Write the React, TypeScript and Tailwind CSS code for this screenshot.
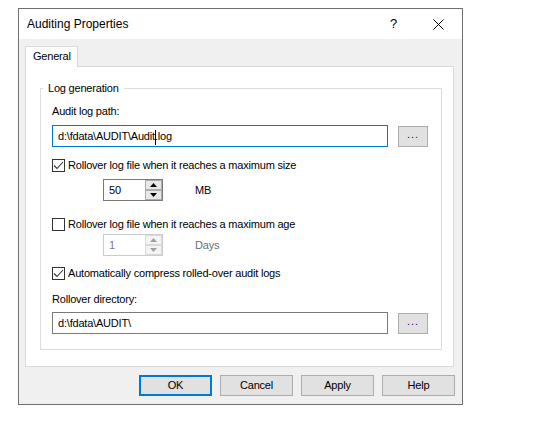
import type { ReactNode } from 'react'

const font = { fontFamily: '"Liberation Sans", Arial, sans-serif' }

function CheckRow({ checked, children }: { checked?: boolean; children: ReactNode }) {
  return (
    <div className="flex items-center h-[16px]">
      <span className="w-[13px] h-[13px] border border-[#333333] bg-white flex items-center justify-center">
        {checked && (
          <svg width="11" height="11" viewBox="0 0 11 11">
            <path d="M1 5.5 L4 8.5 L10 2" fill="none" stroke="#333333" strokeWidth="1.1" />
          </svg>
        )}
      </span>
      <span className="ml-[3px]">{children}</span>
    </div>
  )
}

function Spinner({ value, unit, disabled }: { value: string; unit: string; disabled?: boolean }) {
  const border = disabled ? 'border-[#cccccc]' : 'border-[#7a7a7a]'
  const arrow = disabled ? '#a0a0a0' : '#000000'
  const btn = disabled
    ? 'border-[#d9d9d9] bg-[#f4f4f4]'
    : 'border-[#adadad] bg-[#e8e8e8]'
  return (
    <div className="flex items-center pl-[51px]">
      <div className={`w-[60px] h-[22px] border ${border} bg-white flex`}>
        <span className={`flex-1 pl-[5px] leading-[20px] ${disabled ? 'text-[#7a7a8c]' : 'text-black'}`}>
          {value}
        </span>
        <div className="w-[17px] flex flex-col">
          <span className={`h-[10px] border ${btn} flex items-center justify-center`}>
            <svg width="7" height="4" viewBox="0 0 7 4">
              <path d="M0 4 L3.5 0 L7 4 Z" fill={arrow} />
            </svg>
          </span>
          <span className={`h-[10px] border ${btn} flex items-center justify-center`}>
            <svg width="7" height="4" viewBox="0 0 7 4">
              <path d="M0 0 L3.5 4 L7 0 Z" fill={arrow} />
            </svg>
          </span>
        </div>
      </div>
      <span className={`ml-[32px] ${disabled ? 'text-[#6d6d6d]' : 'text-black'}`}>{unit}</span>
    </div>
  )
}

function BrowseButton() {
  return (
    <button className="w-[30px] h-[21px] border border-[#adadad] bg-[#e1e1e1] flex items-center justify-center text-[#3a0070] leading-none pb-[3px] tracking-[1px]">
      ...
    </button>
  )
}

const dlgBtn = 'w-[73px] h-[21px] bg-[#e1e1e1] border border-[#adadad] flex items-center justify-center'

export default function App() {
  return (
    <div className="w-[557px] h-[442px] bg-white pl-[18px] pt-[8px] text-[11px] tracking-[-0.2px] text-black" style={font}>
      <div className="w-[445px] h-[397px] border border-[#707070] bg-[#f0f0f0] flex flex-col">
        {/* Title bar */}
        <div className="h-[30px] bg-white flex items-center pl-[8px]">
          <span className="flex-1 mb-[1px] text-[12px] tracking-normal">Auditing Properties</span>
          <span className="mr-[36px] text-[13px]">?</span>
          <svg width="11" height="11" viewBox="0 0 11 11" className="mr-[18px]">
            <path d="M0.5 0.5 L10.5 10.5 M10.5 0.5 L0.5 10.5" stroke="#000" strokeWidth="1" />
          </svg>
        </div>

        {/* Tabs */}
        <div className="pl-[6px] pt-[7px]">
          <div className="relative z-10 w-[53px] h-[21px] border border-b-0 border-[#d9d9d9] bg-white pl-[7px] leading-[19px]">
            General
          </div>
          <div className="-mt-px w-[429px] h-[301px] border border-[#d9d9d9] bg-white pl-[14px] pt-[13px]">
            <fieldset className="w-[402px] border border-[#dcdcdc]">
              <legend className="ml-[2px] px-[5px] leading-[16px]">Log generation</legend>
              <div className="px-[11px] pt-[7px] pb-[15px]">
                <div className="leading-[16px]">Audit log path:</div>
                <div className="flex items-center mt-[6px]">
                  <div className="w-[336px] h-[22px] border border-[#0078d7] pl-[5px] leading-[20px] whitespace-nowrap">
                    {'d:\\fdata\\AUDIT\\Audit'}
                    <span className="inline-block w-px h-[15px] bg-black align-middle -mr-px" />
                    {'.log'}
                  </div>
                  <div className="ml-[10px]">
                    <BrowseButton />
                  </div>
                </div>
                <div className="mt-[10px]">
                  <CheckRow checked>Rollover log file when it reaches a maximum size</CheckRow>
                </div>
                <div className="mt-[6px]">
                  <Spinner value="50" unit="MB" />
                </div>
                <div className="mt-[15px]">
                  <CheckRow>Rollover log file when it reaches a maximum age</CheckRow>
                </div>
                <div className="mt-[2px]">
                  <Spinner value="1" unit="Days" disabled />
                </div>
                <div className="mt-[9px]">
                  <CheckRow checked>Automatically compress rolled-over audit logs</CheckRow>
                </div>
                <div className="mt-[10px] leading-[16px]">Rollover directory:</div>
                <div className="flex items-center mt-[5px]">
                  <div className="w-[336px] h-[22px] border border-[#7a7a7a] pl-[5px] leading-[20px] whitespace-nowrap">
                    {'d:\\fdata\\AUDIT\\'}
                  </div>
                  <div className="ml-[10px]">
                    <BrowseButton />
                  </div>
                </div>
              </div>
            </fieldset>
          </div>
        </div>

        {/* Buttons */}
        <div className="flex justify-end gap-[8px] pr-[7px] mt-[8px]">
          <button className={`${dlgBtn} !border-2 !border-[#0078d7]`}>OK</button>
          <button className={dlgBtn}>Cancel</button>
          <button className={dlgBtn}>Apply</button>
          <button className={dlgBtn}>Help</button>
        </div>
      </div>
    </div>
  )
}
